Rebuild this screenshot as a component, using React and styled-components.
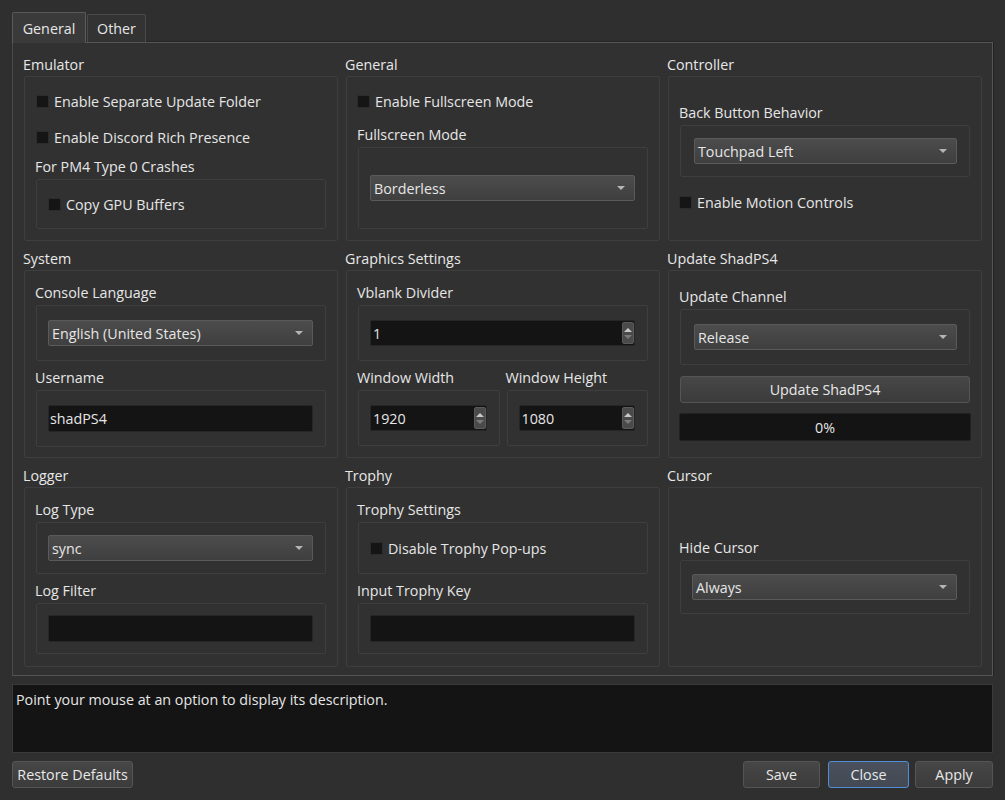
import React from "react";
import styled, { createGlobalStyle, css } from "styled-components";

const GlobalStyle = createGlobalStyle`
  html, body { margin: 0; padding: 0; background: #2f2f2f; }
  body {
    font-family: "Open Sans", "Noto Sans", "Liberation Sans", sans-serif;
    font-size: 14.3px;
    color: #e6e6e6;
  }
  * { box-sizing: border-box; }
`;

const Window = styled.div`
  width: 1005px;
  height: 800px;
  padding: 12px;
  display: flex;
  flex-direction: column;
  background: #2f2f2f;
`;

const TabBar = styled.div`
  display: flex;
  align-items: flex-end;
  height: 30px;
  position: relative;
  z-index: 1;
`;

const Tab = styled.div`
  height: ${(p) => (p.$active ? "31px" : "28px")};
  width: ${(p) => p.$w}px;
  display: flex;
  align-items: center;
  justify-content: center;
  border: 1px solid ${(p) => (p.$active ? "#5a5a5a" : "#4a4a4a")};
  border-bottom: none;
  border-radius: 2px 2px 0 0;
  background: ${(p) => (p.$active ? "#3a3a3a" : "#333333")};
  margin-right: 1px;
  margin-bottom: ${(p) => (p.$active ? "-1px" : "0")};
  color: #e6e6e6;
`;

const TabPanel = styled.div`
  border: 1px solid #555555;
  border-left-color: #4a4a4a;
  box-shadow: 1px 0 0 #222, 0 -1px 0 #262626;
  background: #313131;
  padding: 11px 10px 8px 11px;
  display: grid;
  grid-template-columns: 1fr 1fr 1fr;
  grid-template-rows: 187px 210px 202px;
  column-gap: 8px;
  row-gap: 7px;
`;

const Group = styled.div`
  display: flex;
  flex-direction: column;
  min-width: 0;
`;

const GroupTitle = styled.div`
  height: 22px;
  line-height: 22px;
  margin-left: -1px;
  color: #e8e8e8;
`;

const Frame = styled.div`
  flex: 1;
  border: 1px solid #3e3e3e;
  border-radius: 2px;
  display: flex;
  flex-direction: column;
  padding: ${(p) => p.$pt || 0}px 11px 0 11px;
`;

const SubFrame = styled.div`
  border: 1px solid #3e3e3e;
  border-radius: 2px;
  display: flex;
  flex-direction: column;
  margin-top: ${(p) => p.$mt || 0}px;
  padding: ${(p) => p.$pv || 12}px 12px ${(p) => p.$pv || 12}px ${(p) => p.$pl || 11}px;
`;

const CheckRow = styled.div`
  height: 20px;
  display: flex;
  align-items: center;
  gap: 5px;
  margin-top: ${(p) => p.$mt || 0}px;
  margin-left: ${(p) => (p.$ml || 0) - 1}px;
  white-space: nowrap;
`;

const CheckBox = styled.span`
  width: 13px;
  height: 13px;
  flex: none;
  background: #151515;
  border: 1px solid #2c2c2c;
`;

const Label = styled.div`
  height: 20px;
  line-height: 20px;
  margin-top: ${(p) => p.$mt || 0}px;
  margin-left: -1px;
  white-space: nowrap;
`;

const Combo = styled.div`
  height: 26px;
  border: 1px solid #5a5a5a;
  border-radius: 2px;
  background: linear-gradient(#4c4c4c, #3f3f3f);
  display: flex;
  align-items: center;
  justify-content: space-between;
  padding: 0 9px 0 3px;
`;

const Arrow = styled.span`
  width: 0;
  height: 0;
  border-left: 4px solid transparent;
  border-right: 4px solid transparent;
  border-top: 4px solid #b5b5b5;
`;

const LineEdit = styled.div`
  height: ${(p) => p.$h || 27}px;
  border: 1px solid #262626;
  border-radius: 2px;
  background: #141414;
  display: flex;
  align-items: center;
  padding-left: ${(p) => p.$pl || 1}px;
  overflow: hidden;
`;

const SpinText = styled.span`
  flex: 1;
`;

const SpinButtons = styled.div`
  width: 12px;
  align-self: stretch;
  margin: 1px 0;
  background: #4a4a4a;
  border: 1px solid #5a5a5a;
  border-radius: 2px;
  display: flex;
  flex-direction: column;
  align-items: center;
  justify-content: center;
  gap: 3px;
`;

const Tri = styled.span`
  width: 0;
  height: 0;
  border-left: 4px solid transparent;
  border-right: 4px solid transparent;
  ${(p) =>
    p.$up
      ? css`border-bottom: 4px solid #c8c8c8;`
      : css`border-top: 4px solid #7a7a7a;`}
`;

const Row2 = styled.div`
  display: grid;
  grid-template-columns: 1fr 1fr;
  column-gap: 7px;
  margin-top: ${(p) => p.$mt || 0}px;
`;

const Col = styled.div`
  display: flex;
  flex-direction: column;
`;

const PushButton = styled.div`
  height: 27px;
  padding: 0 ${(p) => p.$px || 10}px;
  display: flex;
  align-items: center;
  justify-content: center;
  border: 1px solid ${(p) => (p.$focus ? "#4f8fd8" : "#555555")};
  border-radius: 3px;
  background: ${(p) =>
    p.$focus ? "linear-gradient(#4a515c, #434a54)" : "linear-gradient(#474747, #3b3b3b)"};
  color: #e8e8e8;
  white-space: nowrap;
  margin-top: ${(p) => p.$mt || 0}px;
  margin-left: ${(p) => p.$ml || 0}px;
  width: ${(p) => (p.$w ? `${p.$w}px` : "auto")};
`;

const Progress = styled.div`
  height: 28px;
  margin-top: ${(p) => p.$mt || 0}px;
  margin-left: -1px;
  margin-right: -1px;
  border: 1px solid #222;
  border-radius: 2px;
  background: #141414;
  display: flex;
  align-items: center;
  justify-content: center;
`;

const Description = styled.div`
  margin-top: 8px;
  height: 70px;
  border: 1px solid #3a3a3a;
  background: #141414;
  padding: 4px 3px;
  line-height: 22px;
`;

const ButtonBar = styled.div`
  margin-top: 8px;
  display: flex;
  align-items: center;
`;

const Spacer = styled.div`
  flex: 1;
`;

function Check({ children, mt, ml }) {
  return (
    <CheckRow $mt={mt} $ml={ml}>
      <CheckBox />
      <span>{children}</span>
    </CheckRow>
  );
}

function ComboBox({ value }) {
  return (
    <Combo>
      <span>{value}</span>
      <Arrow />
    </Combo>
  );
}

function Spin({ value }) {
  return (
    <LineEdit $h={26} $pl={2}>
      <SpinText>{value}</SpinText>
      <SpinButtons>
        <Tri $up />
        <Tri />
      </SpinButtons>
    </LineEdit>
  );
}

export default function App() {
  return (
    <>
      <GlobalStyle />
      <Window>
        <TabBar>
          <Tab $active $w={74}>General</Tab>
          <Tab $w={59}>Other</Tab>
        </TabBar>
        <TabPanel>
          <Group>
            <GroupTitle>Emulator</GroupTitle>
            <Frame $pt={14}>
              <Check ml={1}>Enable Separate Update Folder</Check>
              <Check mt={16} ml={1}>Enable Discord Rich Presence</Check>
              <Label $mt={10}>For PM4 Type 0 Crashes</Label>
              <SubFrame $mt={2} $pv={14}>
                <Check ml={1}>Copy GPU Buffers</Check>
              </SubFrame>
            </Frame>
          </Group>

          <Group>
            <GroupTitle>General</GroupTitle>
            <Frame $pt={14}>
              <Check>Enable Fullscreen Mode</Check>
              <Label $mt={14}>Fullscreen Mode</Label>
              <SubFrame $mt={2} $pv={27}>
                <ComboBox value="Borderless" />
              </SubFrame>
            </Frame>
          </Group>

          <Group>
            <GroupTitle>Controller</GroupTitle>
            <Frame $pt={26}>
              <Label>Back Button Behavior</Label>
              <SubFrame $mt={2} $pv={12} $pl={13}>
                <ComboBox value="Touchpad Left" />
              </SubFrame>
              <Check mt={15}>Enable Motion Controls</Check>
            </Frame>
          </Group>

          <Group>
            <GroupTitle>System</GroupTitle>
            <Frame $pt={12}>
              <Label>Console Language</Label>
              <SubFrame $mt={2} $pv={14}>
                <ComboBox value="English (United States)" />
              </SubFrame>
              <Label $mt={7}>Username</Label>
              <SubFrame $mt={2} $pv={14}>
                <LineEdit>shadPS4</LineEdit>
              </SubFrame>
            </Frame>
          </Group>

          <Group>
            <GroupTitle>Graphics Settings</GroupTitle>
            <Frame $pt={12}>
              <Label>Vblank Divider</Label>
              <SubFrame $mt={2} $pv={14}>
                <Spin value="1" />
              </SubFrame>
              <Row2 $mt={7}>
                <Col>
                  <Label>Window Width</Label>
                  <SubFrame $mt={2} $pv={14}>
                    <Spin value="1920" />
                  </SubFrame>
                </Col>
                <Col>
                  <Label>Window Height</Label>
                  <SubFrame $mt={2} $pv={14}>
                    <Spin value="1080" />
                  </SubFrame>
                </Col>
              </Row2>
            </Frame>
          </Group>

          <Group>
            <GroupTitle>Update ShadPS4</GroupTitle>
            <Frame $pt={16}>
              <Label>Update Channel</Label>
              <SubFrame $mt={2} $pv={14} $pl={13}>
                <ComboBox value="Release" />
              </SubFrame>
              <PushButton $mt={11}>Update ShadPS4</PushButton>
              <Progress $mt={10}>0%</Progress>
            </Frame>
          </Group>

          <Group>
            <GroupTitle>Logger</GroupTitle>
            <Frame $pt={12}>
              <Label>Log Type</Label>
              <SubFrame $mt={2} $pv={12}>
                <ComboBox value="sync" />
              </SubFrame>
              <Label $mt={7}>Log Filter</Label>
              <SubFrame $mt={2} $pv={11}>
                <LineEdit />
              </SubFrame>
            </Frame>
          </Group>

          <Group>
            <GroupTitle>Trophy</GroupTitle>
            <Frame $pt={12}>
              <Label>Trophy Settings</Label>
              <SubFrame $mt={2} $pv={15}>
                <Check ml={1}>Disable Trophy Pop-ups</Check>
              </SubFrame>
              <Label $mt={7}>Input Trophy Key</Label>
              <SubFrame $mt={2} $pv={11}>
                <LineEdit />
              </SubFrame>
            </Frame>
          </Group>

          <Group>
            <GroupTitle>Cursor</GroupTitle>
            <Frame $pt={50}>
              <Label>Hide Cursor</Label>
              <SubFrame $mt={2} $pv={13}>
                <ComboBox value="Always" />
              </SubFrame>
            </Frame>
          </Group>
        </TabPanel>

        <Description>Point your mouse at an option to display its description.</Description>

        <ButtonBar>
          <PushButton $w={121}>Restore Defaults</PushButton>
          <Spacer />
          <PushButton $w={77}>Save</PushButton>
          <PushButton $w={81} $ml={8} $focus>Close</PushButton>
          <PushButton $w={78} $ml={6}>Apply</PushButton>
        </ButtonBar>
      </Window>
    </>
  );
}
